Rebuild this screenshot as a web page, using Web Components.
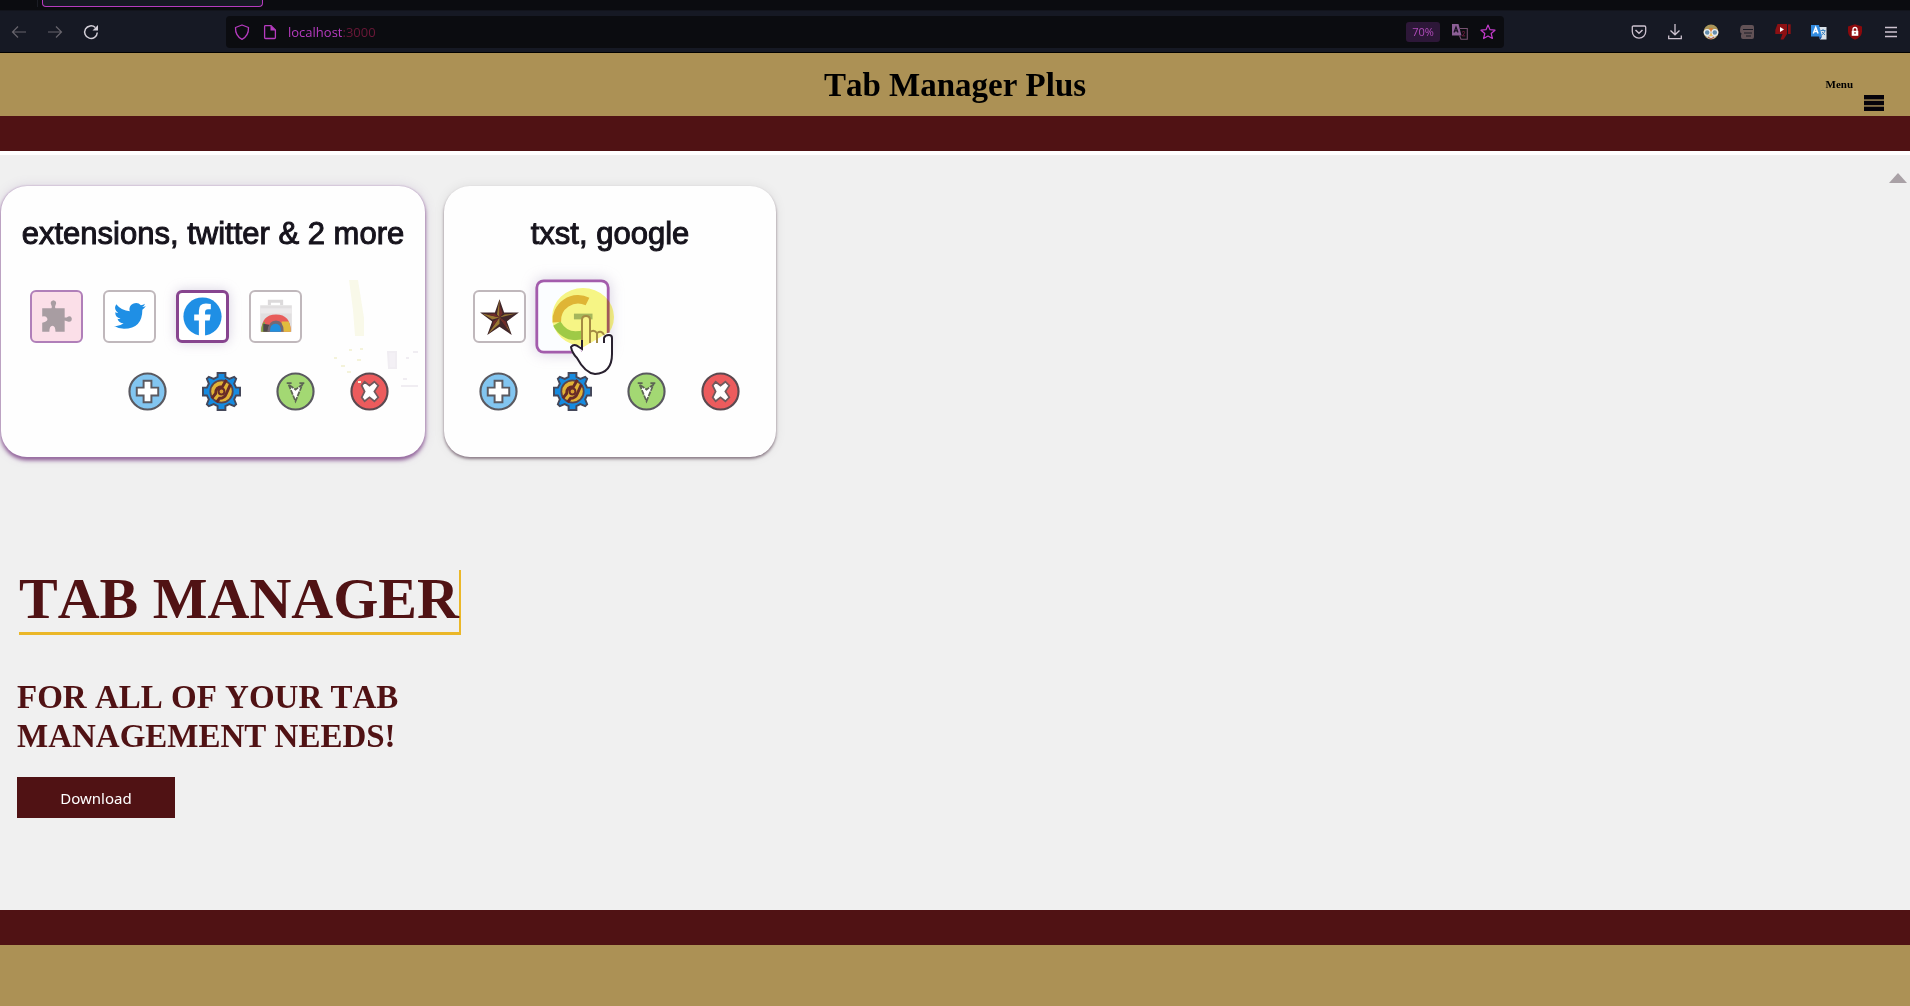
<!DOCTYPE html>
<html lang="en">
<head>
<meta charset="utf-8">
<title>Tab Manager Plus</title>
<style>
:root{--gold:#ac9155;--maroon:#501214;--paper:#f0f0f0;--accent:#ebb728}
body{margin:0;background:var(--paper);font-family:"Liberation Serif",serif;color:#000;font-kerning:none}
</style>
</head>
<body>
<tm-app></tm-app>
<script>
const ICONS = {
  back:['0 0 16 16','<path d="M15 8H1.5M7 2.5 1.5 8 7 13.500" fill="none" stroke="#67646c" stroke-width="1.2"/>'],
  forward:['0 0 16 16','<path d="M1 8h13.500M9 2.500 14.500 8 9 13.500" fill="none" stroke="#67646c" stroke-width="1.200"/>'],
  reload:['0 0 16 16','<path d="M14.300 8.500a6.300 6.300 0 1 1-2-5" fill="none" stroke="#d3cfd8" stroke-width="1.500"/><path d="M15 1v5.500H9.500z" fill="#d3cfd8"/>'],
  shield:['0 0 16 16','<path d="M8 1 14.500 3.500C14.700 9 12.500 13 8 15.300 3.500 13 1.300 9 1.500 3.500Z" fill="none" stroke="#b63bbf" stroke-width="1.300" stroke-linejoin="round"/>'],
  page:['0 0 16 16','<path d="M3.500 1.600H9L13.400 6v7.500q0 1-1 1h-8.800q-1 0-1-1v-11q0-1 1-.9Z" fill="none" stroke="#b63bbf" stroke-width="1.300"/><path d="M8.500 1.500V6.500h5z" fill="#b63bbf"/>'],
  translate:['0 0 16 16','<path d="M0 0h6.500l3 11.500H0z" fill="#8c5f96"/><path d="M2 8.500 4 3l2 5.500M3 6.800h2.200" fill="none" stroke="#17101f" stroke-width="1.200"/><path d="M8 4.500h7.300v10.800H9L7.500 11.500" fill="none" stroke="#76516f" stroke-width="1.100"/><path d="M10 8.300q2.500-2 2.600.2-.4 1.500-2.400 3.400h3" fill="none" stroke="#6d1b3f"/>'],
  star:['0 0 16 16','<path d="m8 1 2 4.700 5 .5-3.800 3.300L12.400 14.500 8 12l-4.400 2.500L4.800 9.500 1 6.200l5-.5Z" fill="none" stroke="#c33bcb" stroke-width="1.200" stroke-linejoin="round"/>'],
  pocket:['0 0 16 16','<path d="M2.500 2h11q1.200 0 1.200 1.200V7.500a6.700 6.700 0 0 1-13.400 0V3.200Q1.300 2 2.500 2Z" fill="none" stroke="#cdc2cf" stroke-width="1.300"/><path d="M4.500 6 8 9.200 11.500 6" fill="none" stroke="#cdc2cf" stroke-width="1.500"/>'],
  download:['0 0 16 16','<path d="M8 0v10.500M3.500 6.500 8 10.800 12.500 6.500M1.700 11.500v3.200h12.600v-3.200" fill="none" stroke="#cdc2cf" stroke-width="1.300"/>'],
  owl:['0 0 16 16','<circle cx="8" cy="8" r="7.500" fill="#a99559"/><path d="M6 4h4l-1 4H7z" fill="#d57b35"/><path d="M2 11q6 8 12 0z" fill="#ddd9d2"/><circle cx="4.200" cy="8.500" r="2.900" fill="#658fae" stroke="#eee" stroke-width="1.300"/><circle cx="11.800" cy="8.500" r="2.900" fill="#658fae" stroke="#eee" stroke-width="1.300"/><path d="m8 9-2 3h4z" fill="#f4c45a"/><path d="m5 13 3 2 3-2" fill="none" stroke="#a34b3d"/>'],
  servers:['0 0 16 16','<path d="M4 1h9q2 0 2 2v10q0 2-2 2H4q-2 0-2-2v-2q0-1 1-1-2-1-2-3 0-6 3-6Z" fill="#625256"/><path d="M4 5.500h10M5 9h8M7 12h5" stroke="#191a24" stroke-width="1.100"/>'],
  thumb:['0 0 16 16','<path d="M2.500 0H12v10l-3.500 5.500H5.500L7.500 10H.3V6z" fill="#8c1013"/><path d="M13 .3h2.700V10H13z" fill="#8c1013"/><path d="M5 3v5l4-2.500z" fill="#fff"/>'],
  gtranslate:['0 0 16 16','<path d="M6 3h9.500v12.500H9z" fill="#dae2e9"/><path d="M0 1h8l3 11.500H0z" fill="#318be0"/><path d="M2.300 9.500 4.700 3.300l2.400 6.200M3.300 7.500h3" fill="none" stroke="#fff" stroke-width="1.500"/><path d="M9.500 6.500h5M12 5v1.500M14 7q-1 3-3.500 4M11 8l3 3" fill="none" stroke="#4284be"/><path d="m7.500 12.500 2 3 1.500-3z" fill="#1b57aa"/>'],
  ublock:['0 0 16 16','<path d="M8 .300 15 2.500v5Q15 13 8 15.700 1 13 1 7.500v-5Z" fill="#8b090c"/><path d="M6 7V5.500a2 2 0 0 1 4 0V7" fill="none" stroke="#fff" stroke-width="1.300"/><path d="M4.700 6.800h6.600v5H4.700z" fill="#fff"/><path d="M8 8v2" stroke="#8b090c"/>'],
  burger:['0 0 16 16','<path d="M2 3.500h12M2 8h12M2 12.500h12" stroke="#cdc2cf" stroke-width="1.300"/>'],
  menu:['0 0 20 16','<path d="M0 0h20v4.500H0zM0 5.800h20v4.500H0zM0 11.600h20V16H0z" fill="#06030a"/><path d="M0 5.200h20M0 11h20" stroke="#84704a"/>'],
  up:['0 0 18 10','<path d="M9 0 18 10H0z" fill="#a9a1a6"/>'],
  puzzle:['0 0 48 48','<path d="M10 16h9q1-1 0-3-2-4 2-5 4 1 2 5-1 2 0 3h9v9h2q4-3 5 1 0 4-4 3l-3-1v11H23q0-6-3-6-3 0-3 6h-7v-9q6-1 5-4-1-3-5-2z" fill="#a89da2"/>'],
  twitter:['0 0 24 24','<path d="M20 6.900q-.8.400-1.800.5 1-.6 1.400-1.700-.9.500-2 .8a3.200 3.200 0 0 0-5.500 2.900Q8.100 9.200 5.500 6q-1.500 2.500 1 4.300-.8 0-1.500-.4 0 2.500 2.600 3.200-.700.2-1.500 0 .7 2.100 3 2.200-2 1.700-4.700 1.400Q6.600 18 9.300 18q9 0 9-9.300 1-.7 1.700-1.800Z" fill="#1f8fe5"/>'],
  facebook:['0 0 48 48','<circle cx="24" cy="24" r="19.500" fill="#1f8fe5"/><path d="M20.300 44V28h-4.800v-6h4.800v-4q0-7.200 7.200-7.200 3 0 5 .5v5.200h-2.900q-3 0-3 3V22h5.700l-1 6h-4.700v16z" fill="#fff"/>'],
  store:['0 0 48 48','<path d="M18 13V9h12v4" fill="none" stroke="#dcdadb" stroke-width="3"/><path d="M9 13h31v26H9z" fill="#e1dfe0"/><path d="M9 16h31v5H9z" fill="#eceaeb"/><path d="M10 39q0-17 14.500-17T39 39z" fill="#e85d5b"/><path d="M10 39q0-7 3-10l4 10z" fill="#80a943"/><path d="M12 39V31l6 1v7z" fill="#51484d"/><path d="M30 29h7q2 4 2 10H30z" fill="#e2bd3e"/><path d="M16 39q1-11 8.500-11T32 39z" fill="#756974"/><path d="M18.500 39q0-8 5.500-8t5.500 8z" fill="#2190df"/>'],
  txst:['0 0 48 48','<path d="m24 7 4.500 13.200H43L31.200 28.800 36 42 24 34 12 42l4.800-13.200L5 20.200h14.500Z" fill="#41272a"/><path d="M24 7v18l-2.500-3ZM40 21 24 25l5-3ZM35 40 24 25l5 4ZM13 41l11-16v6ZM7 21 24 25l-7 2Z" fill="#9a7833"/><path d="M24 12v13l3-4zM12 22l12 3-5-4zM24 25l-7 9 1-5zM24 25l8 12-2-8z" fill="#702b28"/>'],
  google:['0 0 48 48','<path d="M34.500 13.500A15 15 0 0 0 13 28" fill="none" stroke="#e4bb66" stroke-width="6"/><path d="M13 29q7 12 20 7" fill="none" stroke="#a2d186" stroke-width="6"/><path d="M25 24h13" fill="none" stroke="#a8bcb0" stroke-width="4"/>'],
  add:['0 0 40 40','<circle cx="20" cy="20" r="18.500" fill="#82c5f0" stroke="#5a5960" stroke-width="2.200"/><path d="M16 9h8v7h7v8h-7v7h-8v-7H9v-8h7z" fill="#fff" stroke="#5a5960" stroke-width="2"/>'],
  gear:['0 0 40 40','<path d="M16 1h8v4l4 2 5-2 2 2-2 5 2 4h4v8h-4l-2 4 2 5-2 2-5-2-4 2v4h-8v-4l-4-2-5 2-2-2 2-5-2-4H1v-8h4l2-4-2-5 2-2 5 2 4-2z" fill="#168be0" stroke="#45485a" stroke-width="2"/><circle cx="20" cy="20" r="11.500" fill="#e2b336" stroke="#59434a" stroke-width="1.800"/><path d="m25 8-4 7q-7 0-7 7l-4 5M29 13l-4 9q-2 5-7 5l-3 4" fill="none" stroke="#682b27" stroke-width="3"/><circle cx="20" cy="20" r="3" fill="#d99f32" stroke="#682b27" stroke-width="2"/>'],
  filter:['0 0 40 40','<circle cx="20" cy="20" r="18.500" fill="#a3d873" stroke="#5a5960" stroke-width="2.200"/><path d="M11 11.500h5M24 11.500h5M13 13l7 17 7-17-7 5z" fill="#fff" stroke="#5d6554" stroke-width="1.800" stroke-dasharray="5 1"/>'],
  close:['0 0 40 40','<circle cx="20" cy="20" r="18.500" fill="#ec5b5d" stroke="#5a4950" stroke-width="2.200"/><path d="m12 14 3-4 5 4 5-4 4 4-4 6 4 6-4 4-5-4-5 4-3-4 3-6z" fill="#fff" stroke="#71585c" stroke-width="1.800"/>'],
  pointer:['0 0 64 88','<ellipse cx="32" cy="29" rx="31" ry="29" fill="#faf785" style="mix-blend-mode:multiply"/><path d="M31 60V32q0-4 4-4t4 4v12q4-3 7 1 5-3 7 2 5-4 8-1v16q0 21-18 23-10-1-17-13-5-5-6-11 5-4 11 3Z" fill="#fff"/><path d="M31 60V32q0-4 4-4t4 4v12q4-3 7 1 5-3 7 2" fill="#f9f48a" stroke="#a48b43" stroke-width="2"/><path d="M39 43v12M46 45v10" stroke="#a48b43" stroke-width="2"/><path d="M31 52v9l-3-2q-5-4-8 0 1 6 6 11 8 15 18 16 17-1 17-20V50q0-3-3-3-4 0-5 3v5" fill="none" stroke="#28202e" stroke-width="2"/>'],
  residue:['0 0 100 130','<path d="M15 0h9l6 38v18h-9l-2-26Z" fill="#f9f9e9"/><path d="M0 78h3m4 8h4m4-16h3m5 10h4m-14 12h4m9-23h3m-5 33h3" stroke="#f4f3da" stroke-width="2"/><path d="M54 72h8v16h-7zM67 106h17M72 78h3m4-6h5m-15 27h4" fill="#f3f0f5" stroke="#f0edf2" stroke-width="2"/>']
};

const define = (tag, css, html) => customElements.define(tag, class extends HTMLElement {
  constructor(){
    super();
    const markup = typeof html === 'function' ? html(this) : html;
    this.attachShadow({mode:'open'}).innerHTML = `<style>*{box-sizing:border-box}${css}</style>${markup}`;
  }
});

define('tm-icon', `:host{display:block;flex:none;width:16px;height:16px}svg{display:block;width:100%;height:100%;overflow:visible}`,
  el => { const [box, art] = ICONS[el.getAttribute('name')]; return `<svg viewBox="${box}" aria-hidden="true">${art}</svg>`; });

define('tm-browser', `
:host{display:block;background:#161924;border-bottom:1px solid #000}
.strip{height:11px;background:#0b0c10;display:flex;padding-left:37px;border-bottom:1px solid #12141c}
.tab{width:226px;height:7px;padding-left:4px;border-left:1px solid #1b1d25}
.tab i{display:block;height:7px;background:#161924;border:1px solid #b63bbf;border-top:0;border-radius:0 0 4px 4px}
.bar{display:flex;align-items:center;height:41px}
button{padding:0;border:0;background:none;display:block}
.nav{width:226px;display:flex;gap:20px;padding-left:11px}
.url{flex:1;height:32px;background:#0b0c10;border-radius:4px;display:flex;align-items:center;gap:12px;padding:0 8px}
.field{flex:1;font:13px/20px "Open Sans",sans-serif;color:#b63bbf;margin-left:-2px;outline:0}
.field span{color:#6b1838}
.zoom{width:34px;height:20px;border-radius:3px;background:#2d1738;color:#b04bb9;font:11px/20px "Open Sans",sans-serif}
.tools{width:406px;padding:0 11px 0 127px;display:flex;justify-content:space-between}`,
`<div class="strip"><div class="tab"><i></i></div></div>
<div class="bar">
 <div class="nav"><button aria-label="Back"><tm-icon name="back"></tm-icon></button><button aria-label="Forward"><tm-icon name="forward"></tm-icon></button><button aria-label="Reload"><tm-icon name="reload"></tm-icon></button></div>
 <div class="url"><tm-icon name="shield"></tm-icon><tm-icon name="page"></tm-icon>
  <div class="field" role="textbox" contenteditable="true" spellcheck="false" aria-label="Address">localhost<span>:3000</span></div>
  <button class="zoom">70%</button><button aria-label="Translate"><tm-icon name="translate"></tm-icon></button><button aria-label="Bookmark"><tm-icon name="star"></tm-icon></button></div>
 <div class="tools">${['pocket','download','owl','servers','thumb','gtranslate','ublock','burger'].map(n=>`<button aria-label="${n}"><tm-icon name="${n}"></tm-icon></button>`).join('')}</div>
</div>`);

define('tm-header', `
:host{display:block;background:var(--gold);border-bottom:35px solid var(--maroon)}
header{display:grid;grid-template-columns:1fr auto 1fr;height:63px;align-items:center}
h1{grid-column:2;margin:0;font-size:33px;line-height:38px}
.menu{justify-self:end;align-self:end;display:flex;align-items:flex-end;gap:11px;padding:0 26px 5px 0;border:0;background:none;color:#000;font:bold 11px/12px "Liberation Serif",serif}
.menu span{padding-bottom:21px}
tm-icon{width:20px}`,
`<header><h1><slot></slot></h1><button class="menu"><span>Menu</span><tm-icon name="menu"></tm-icon></button></header>`);

define('tm-tab', `
:host{display:block;flex:none}
button{display:block;width:53px;height:53px;padding:0;border:2px solid #c0b8bc;border-radius:6px;background:#fff}
tm-icon{width:49px;height:49px}
:host([pinned]) button{background:#fbdfe8;border-color:#b07fb9}
:host([active]) button{border-color:#87458f;border-width:3px;box-shadow:0 0 12px #a090b866}
:host([active]) tm-icon{width:47px;height:47px}
:host([hover]) button{transform:scale(1.4);background:#fbfdff;border-color:#a35cac;box-shadow:0 0 10px #a090b866}`,
el => `<button aria-label="${el.getAttribute('name')}"><tm-icon name="${el.getAttribute('name')}"></tm-icon></button>`);

define('tm-window', `
:host{display:block;position:relative;flex:none;width:332px;padding:30px 0 46px;background:#fefefe;border-radius:26px;box-shadow:0 2px 3px #8a7a86,0 0 12px #00000014}
:host([wide]){width:424px;box-shadow:0 0 2px #b79ac0,0 3px 4px #85508e,0 0 12px #8060a030}
h2{margin:0 0 38px;text-align:center;white-space:nowrap;font:31px/36px "Liberation Sans",sans-serif;color:#16131c;-webkit-text-stroke:1px #16131c}
.tabs{display:flex;gap:20px;padding-left:29px}
.actions{display:flex;justify-content:flex-end;gap:35px;padding:29px 36px 0 0}
button{display:block;padding:0;border:0;background:none}
.actions tm-icon{width:39px;height:39px}`,
el => `<h2>${el.getAttribute('label')}</h2><div class="tabs"><slot></slot></div>
<div class="actions">${['add','gear','filter','close'].map(n=>`<button aria-label="${n}"><tm-icon name="${n}"></tm-icon></button>`).join('')}</div><slot name="overlay"></slot>`);

define('tm-hero', `
:host{display:block;flex:1;border-top:4px solid #fff;background:var(--paper);padding-bottom:90px}
.demo{display:flex;align-items:flex-start;gap:19px;padding:31px 3px 0 1px}
.residue{position:absolute;left:333px;top:94px;width:100px;height:130px}
.pointer{position:absolute;left:107px;top:102px;width:64px;height:88px}
.scroll{margin:-13px 0 0 auto;padding:0;border:0;background:none}
.scroll tm-icon{width:18px;height:10px}
.copy{padding:113px 17px 0}
h1{width:fit-content;margin:0 0 43px 2px;padding-bottom:4px;font-size:58px;line-height:58px;color:var(--maroon);border-bottom:3px solid var(--accent);border-right:2px solid var(--accent)}
h2{max-width:420px;margin:0 0 21px;font-size:33px;line-height:39px;color:var(--maroon)}
.download{width:158px;height:41px;border:0;padding:0;background:var(--maroon);color:#fff;font:16px/20px "Noto Sans",sans-serif;font-size:15px}`,
`<div class="demo">
 <tm-window wide label="extensions, twitter &amp; 2 more"><tm-tab name="puzzle" pinned></tm-tab><tm-tab name="twitter"></tm-tab><tm-tab name="facebook" active></tm-tab><tm-tab name="store"></tm-tab><tm-icon slot="overlay" class="residue" name="residue"></tm-icon></tm-window>
 <tm-window label="txst, google"><tm-tab name="txst"></tm-tab><tm-tab name="google" hover></tm-tab><tm-icon slot="overlay" class="pointer" name="pointer"></tm-icon></tm-window>
 <button class="scroll" aria-label="Scroll up"><tm-icon name="up"></tm-icon></button>
</div>
<div class="copy"><h1>TAB MANAGER</h1><h2>FOR ALL OF YOUR TAB MANAGEMENT NEEDS!</h2><button class="download">Download</button></div>`);

define('tm-footer', `:host{display:block;height:96px;background:var(--gold);border-top:35px solid var(--maroon)}`, `<footer></footer>`);

define('tm-app', `:host{display:flex;flex-direction:column;min-height:100vh}`,
`<tm-browser></tm-browser><tm-header>Tab Manager Plus</tm-header><tm-hero></tm-hero><tm-footer></tm-footer>`);
</script>
</body>
</html>
